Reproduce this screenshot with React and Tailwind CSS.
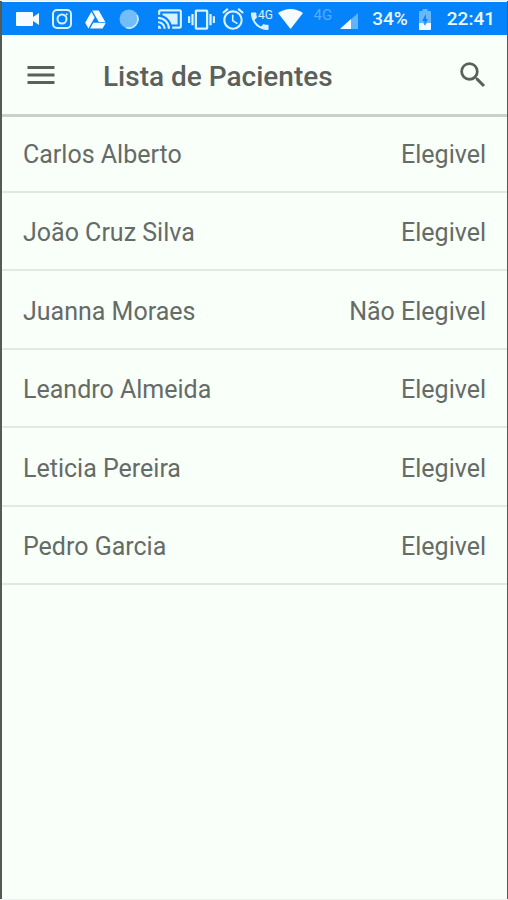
import { MdAlarm, MdCastConnected, MdMenu, MdSearch, MdVibration } from "react-icons/md";

const patients = [
  { name: "Carlos Alberto", status: "Elegivel" },
  { name: "João Cruz Silva", status: "Elegivel" },
  { name: "Juanna Moraes", status: "Não Elegivel" },
  { name: "Leandro Almeida", status: "Elegivel" },
  { name: "Leticia Pereira", status: "Elegivel" },
  { name: "Pedro Garcia", status: "Elegivel" },
];

function StatusBar() {
  return (
    <div className="flex h-[33px] items-center bg-[#0583fb] pl-[14px] pr-3 pt-px text-[#d8f1ff]">
      {/* Notifications */}
      <div className="flex items-center gap-[13px]">
        <svg viewBox="0 0 23 14" className="h-[14px] w-[23px]" fill="#f5fcff">
          <path d="M1 0h15q1 0 1 1v4l6-4v12l-6-4v4q0 1-1 1H1q-1 0-1-1V1q0-1 1-1z" />
        </svg>
        <svg viewBox="0 0 20 20" className="size-5" fill="none" stroke="currentColor" strokeWidth="2">
          <rect x="1" y="1" width="18" height="18" rx="4" />
          <circle cx="10" cy="10" r="4.5" />
          <circle cx="14.7" cy="5.3" r="1" fill="currentColor" stroke="none" />
        </svg>
        <svg viewBox="1 2 22 19" className="h-[19px] w-[21px]" fill="#f5fcff">
          <path d="M7.71 3.5L1.15 15l3.43 6 6.55-11.5zM9.73 15L6.3 21h13.12l3.43-6zM22.28 14L15.42 2H8.58l6.85 12z" />
        </svg>
        <svg viewBox="0 0 20 20" className="size-5">
          <circle cx="10" cy="10" r="9.5" fill="#74bdfb" />
          <path d="M18 6a9 9 0 0 1-11 12.5" fill="none" stroke="#c5ecff" strokeWidth="1.6" />
        </svg>
      </div>

      {/* Device state */}
      <div className="ml-[18px] flex items-center gap-[5px]">
        <MdCastConnected className="size-[26px]" />
        <MdVibration className="size-[27px]" />
        <MdAlarm className="size-[26px]" />
        <svg viewBox="0 0 22 21" className="h-[21px] w-[22px]" fill="currentColor">
          <path
            transform="translate(-3 0.5) scale(0.98)"
            d="M6.62 10.79c1.44 2.83 3.76 5.14 6.59 6.59l2.2-2.2c.27-.27.67-.36 1.02-.24 1.12.37 2.33.57 3.57.57.55 0 1 .45 1 1V20c0 .55-.45 1-1 1-9.39 0-17-7.61-17-17 0-.55.45-1 1-1h3.5c.55 0 1 .45 1 1 0 1.25.2 2.45.57 3.57.11.35.03.74-.25 1.02z"
          />
          <text x="7" y="10" fontFamily="Roboto, sans-serif" fontSize="12">4G</text>
        </svg>
        <svg viewBox="0 0 25 20" className="h-5 w-[25px]" fill="#f5fcff">
          <path d="M0 4Q12.5-4 25 4L12.5 20z" />
        </svg>
      </div>

      {/* Signal, battery and clock */}
      <div className="ml-auto flex items-center text-[19px] font-medium text-[#ebf8ff]">
        <span className="mb-2 text-[15px] font-normal leading-4 text-[#53adff]">4G</span>
        <svg viewBox="0 0 18 16" className="ml-2 mt-1 h-4 w-[18px]">
          <path d="M0 16L18 0v16z" fill="#5fb4fd" />
          <path d="M0 16L11 6v10z" fill="#f5fcff" />
        </svg>
        <span className="ml-[14px]">34%</span>
        <svg viewBox="0 0 12 21" className="ml-[11px] h-[21px] w-3">
          <path d="M3.5 0h5v2H11q1 0 1 1v17q0 1-1 1H1q-1 0-1-1V3q0-1 1-1h2.5z" fill="#67b9fb" />
          <path d="M0 14h4l2 3 2-3h4v6q0 1-1 1H1q-1 0-1-1z" fill="#f5fcff" />
          <path d="M7 5L3 12h2.5v4L9 10H7z" fill="#0583fb" />
        </svg>
        <span className="ml-4">22:41</span>
      </div>
    </div>
  );
}

export default function App() {
  return (
    <div className="flex min-h-screen flex-col border-y border-[#f0f2f0] bg-[#f9fff9] font-[Roboto,sans-serif] text-[#656b66]">
      <div className="flex grow flex-col border-l-2 border-r border-[#555957] pt-px">
        <StatusBar />

        <header className="relative flex h-[79px] items-center bg-[#f9fff9] pl-[21px] pr-[17px] text-[#5b605c] shadow-[0_3px_0_#cbd0cb]">
          <button type="button" aria-label="Menu">
            <MdMenu className="size-9" />
          </button>
          <h1 className="ml-11 grow pt-1 text-[28px] font-medium">Lista de Pacientes</h1>
          <button type="button" aria-label="Buscar">
            <MdSearch className="size-[34px]" />
          </button>
        </header>

        <main>
          <ul className="grid min-h-[471px] auto-rows-fr">
            {patients.map((patient) => (
              <li
                key={patient.name}
                className="flex items-center justify-between border-b-2 border-[#e3e8e3] px-[21px] pt-1 text-[25px]"
              >
                <span>{patient.name}</span>
                <span>{patient.status}</span>
              </li>
            ))}
          </ul>
        </main>
      </div>
    </div>
  );
}
